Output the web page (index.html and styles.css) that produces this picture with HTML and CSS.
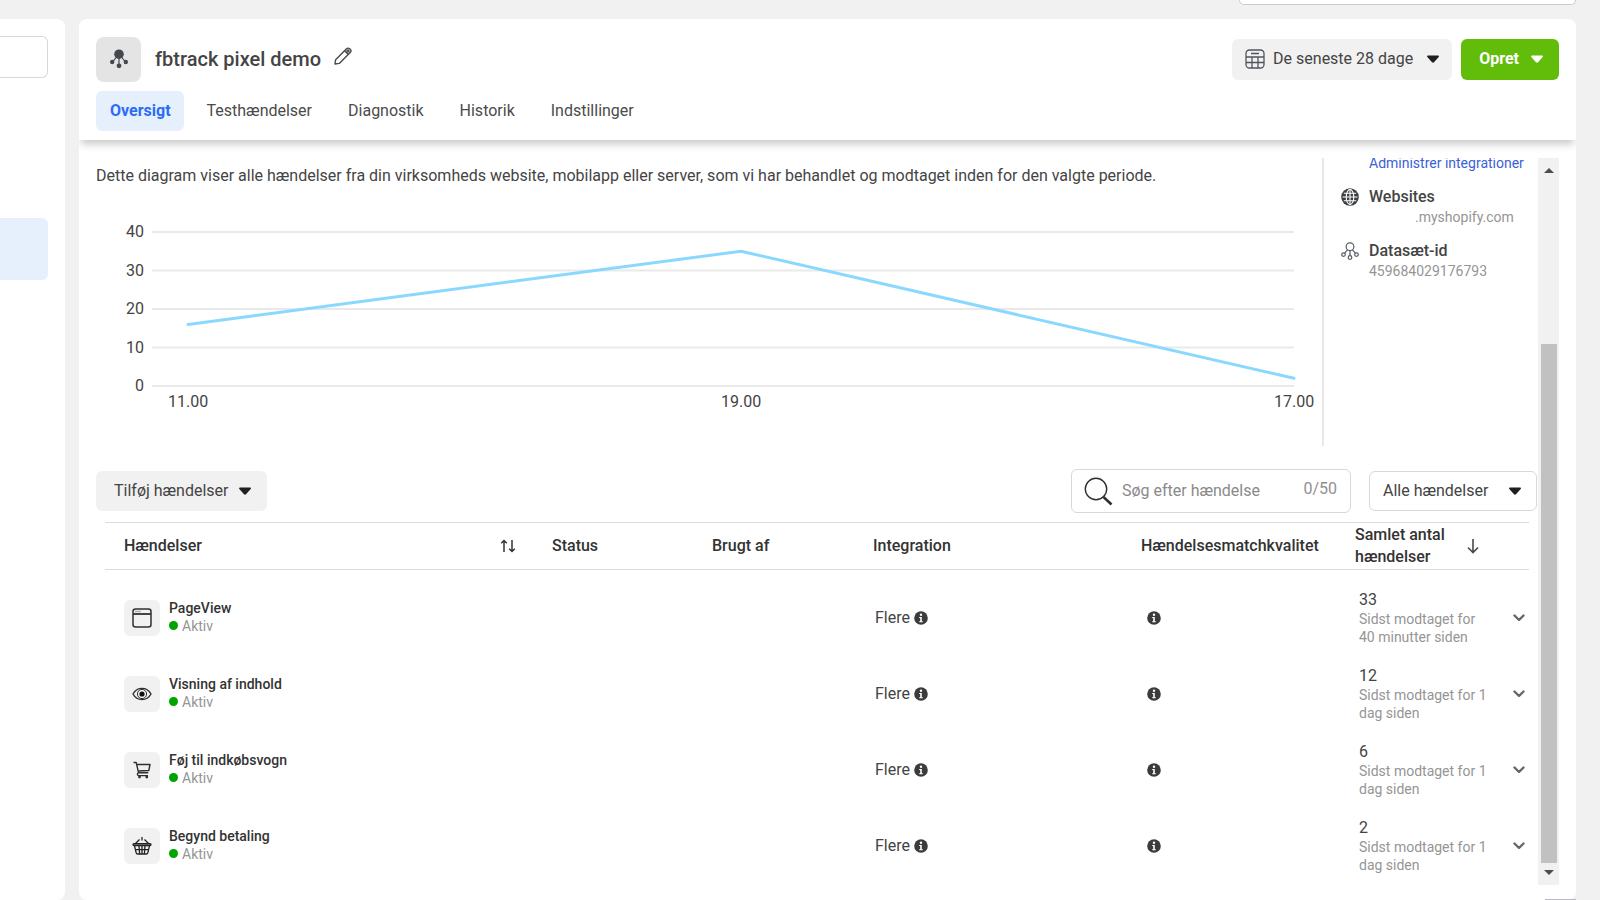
FILE: index.html
```html
<!DOCTYPE html>
<html lang="da">
<head>
<meta charset="utf-8">
<meta name="viewport" content="width=device-width, initial-scale=1">
<title>fbtrack pixel demo</title>
<link rel="stylesheet" href="styles.css">
</head>
<body>
<svg class="sprite" aria-hidden="true">
  <symbol id="caret" viewBox="0 0 12 8"><path d="M1 0.5h10c.8 0 1.200.9.7 1.500L7 7.200c-.6.6-1.400.6-2 0L.3 2C-.2 1.400.2.5 1 .5z" fill="currentColor"/></symbol>
  <symbol id="info" viewBox="0 0 14 14"><circle cx="7" cy="7" r="6.800" fill="#3b3b3b"/><circle cx="7" cy="3.700" r="1.200" fill="#fff"/><path d="M5.200 6h2.600v4.200h1v1H5.200v-1h1V7h-1z" fill="#fff"/></symbol>
  <symbol id="chevron" viewBox="0 0 12 8"><path d="M1.500 1.500L6 6l4.500-4.500" fill="none" stroke="#616870" stroke-width="2.400" stroke-linecap="round" stroke-linejoin="round"/></symbol>
</svg>

<div class="top-field"></div>
<div class="page">
  <aside class="side">
    <input class="side-input" type="text" aria-label="Søg">
    <div class="side-item"></div>
  </aside>

  <main class="panel">
    <header class="head">
      <div class="head-row">
        <span class="logo">
          <svg width="18" height="20" viewBox="0 0 18 20" fill="#444950" stroke="#444950"><circle cx="9" cy="5.200" r="4.800" stroke="none"/><circle cx="2.200" cy="13" r="2.200" stroke="none"/><circle cx="15.800" cy="13" r="2.200" stroke="none"/><circle cx="9" cy="16.800" r="2.400" stroke="none"/><path d="M6.500 8L3 12.500M11.500 8l3.500 4.500M9 8v8" stroke-width="1.200" fill="none"/></svg>
        </span>
        <h1 class="title">fbtrack pixel demo</h1>
        <button class="edit" aria-label="Rediger navn">
          <svg width="18" height="18" viewBox="0 0 18 18" fill="none" stroke="#4b4b4b" stroke-width="1.400" stroke-linejoin="round"><path d="M1 17l.6-4.300L12.500 1.800c.9-.9 2.300-.9 3.200 0l.5.5c.9.9.9 2.300 0 3.200L5.300 16.400z"/><path d="M10.600 3.700l3.700 3.700"/><circle cx="14" cy="4" r="1"/></svg>
        </button>
        <button class="btn date">
          <svg width="20" height="20" viewBox="0 0 20 20" fill="none" stroke="#50555c" stroke-width="1.300"><rect x="1" y="1" width="18" height="18" rx="3.500"/><path d="M1 8h18M1 13.500h18M7 8V19M13 8V19M6 4.500h8"/></svg>
          <span>De seneste 28 dage</span>
          <svg class="caret" width="12" height="8"><use href="#caret"/></svg>
        </button>
        <button class="btn create"><span>Opret</span><svg class="caret" width="12" height="8"><use href="#caret"/></svg></button>
      </div>
      <nav class="tabs">
        <a class="tab active" href="#oversigt">Oversigt</a>
        <a class="tab" href="#test">Testhændelser</a>
        <a class="tab" href="#diagnostik">Diagnostik</a>
        <a class="tab" href="#historik">Historik</a>
        <a class="tab" href="#indstillinger">Indstillinger</a>
      </nav>
    </header>

    <div class="body">
      <div class="content">
        <section class="overview">
          <div class="chart">
            <p class="desc">Dette diagram viser alle hændelser fra din virksomheds website, mobilapp eller server, som vi har behandlet og modtaget inden for den valgte periode.</p>
            <div class="plot-row">
              <div class="y-axis"><span>40</span><span>30</span><span>20</span><span>10</span><span>0</span></div>
              <div class="plot">
                <svg class="lines" viewBox="0 0 1142 154" preserveAspectRatio="none" role="img" aria-label="Hændelser over tid">
                  <path class="grid-line" d="M0 0H1142M0 38.500H1142M0 77H1142M0 115.500H1142M0 154H1142"/>
                  <path class="data-line" d="M36 92.400L589 19.250L1142 146.300"/>
                </svg>
              </div>
            </div>
            <div class="x-axis"><span>11.00</span><span>19.00</span><span>17.00</span></div>
          </div>
          <aside class="info">
            <a class="manage" href="#integrationer">Administrer integrationer</a>
            <div class="info-item">
              <svg width="18" height="18" viewBox="0 0 18 18"><circle cx="9" cy="9" r="8.800" fill="#3c4043"/><g fill="none" stroke="#fff" stroke-width="1.100"><ellipse cx="9" cy="9" rx="3.800" ry="7.500"/><path d="M9 1v16M1.500 9h15M2.800 5.300h12.400M2.800 12.700h12.400"/></g></svg>
              <div><h2>Websites</h2><p class="site">.myshopify.com</p></div>
            </div>
            <div class="info-item">
              <svg width="18" height="18" viewBox="0 0 20 20" fill="none" stroke="#5b6068" stroke-width="1.400"><circle cx="10" cy="5.200" r="4.300"/><circle cx="2.800" cy="14" r="2"/><circle cx="17.200" cy="14" r="2"/><circle cx="10" cy="17.200" r="2"/><path d="M7.300 8.700L4 12.300M12.700 8.700l3.300 3.600M10 9.500v5.700"/></svg>
              <div><h2>Datasæt-id</h2><p>459684029176793</p></div>
            </div>
          </aside>
        </section>

        <section class="toolbar">
          <button class="btn add"><span>Tilføj hændelser</span><svg class="caret" width="12" height="8"><use href="#caret"/></svg></button>
          <label class="search">
            <svg width="29" height="29" viewBox="0 0 29 29" fill="none" stroke="#303030"><circle cx="12" cy="12" r="10.700" stroke-width="1.400"/><path d="M19.500 20l8 7.500" stroke-width="2.600"/></svg>
            <input type="text" placeholder="Søg efter hændelse" aria-label="Søg efter hændelse" maxlength="50">
            <span class="count">0/50</span>
          </label>
          <span class="filter">
            <select aria-label="Filtrer hændelser"><option>Alle hændelser</option></select>
            <svg class="caret" width="12" height="8"><use href="#caret"/></svg>
          </span>
        </section>

        <table class="events">
          <colgroup><col><col class="c-status"><col class="c-used"><col class="c-int"><col class="c-match"><col class="c-total"><col class="c-open"></colgroup>
          <thead>
            <tr>
              <th class="first"><div class="th-row">Hændelser<svg width="16" height="14" viewBox="0 0 16 14" fill="none" stroke="#333" stroke-width="1.500"><path d="M4 13V1.500M1.200 4.300L4 1.500l2.800 2.800M12 1v11.500M9.200 9.700l2.800 2.800 2.800-2.800"/></svg></div></th>
              <th>Status</th><th>Brugt af</th><th>Integration</th><th>Hændelsesmatchkvalitet</th>
              <th colspan="2"><div class="th-total"><span>Samlet antal hændelser</span><svg width="12" height="16" viewBox="0 0 12 16" fill="none" stroke="#4a4a4a" stroke-width="1.600"><path d="M6 1v13M1 9.500l5 5 5-5"/></svg></div></th>
            </tr>
          </thead>
          <tbody>
            <tr>
              <td class="first"><div class="event"><span class="tile"><svg width="20" height="20" viewBox="0 0 20 20" fill="none" stroke="#303030" stroke-width="1.500"><rect x="1" y="1" width="18" height="18" rx="2.500"/><path d="M1 6h18" stroke-width="1.800"/><path d="M3 3.500h6" stroke="#aaa" stroke-width="1.400"/></svg></span><div><b>PageView</b><span class="status">Aktiv</span></div></div></td>
              <td></td><td></td>
              <td class="int">Flere <svg width="14" height="14"><use href="#info"/></svg></td>
              <td class="match"><svg width="14" height="14"><use href="#info"/></svg></td>
              <td class="total"><span class="num">33</span><span class="sub">Sidst modtaget for 40 minutter siden</span></td>
              <td class="open"><button aria-label="Vis detaljer"><svg width="12" height="8"><use href="#chevron"/></svg></button></td>
            </tr>
            <tr>
              <td class="first"><div class="event"><span class="tile"><svg width="20" height="14" viewBox="0 0 20 14" fill="none" stroke="#303030" stroke-width="1.400"><path d="M1 7c2-3.600 5.300-5.600 9-5.600S17 3.400 19 7c-2 3.600-5.300 5.600-9 5.600S3 10.600 1 7z"/><circle cx="10" cy="7" r="4.600" stroke-width="1"/><circle cx="10" cy="7" r="2.600" fill="#111" stroke="none"/></svg></span><div><b>Visning af indhold</b><span class="status">Aktiv</span></div></div></td>
              <td></td><td></td>
              <td class="int">Flere <svg width="14" height="14"><use href="#info"/></svg></td>
              <td class="match"><svg width="14" height="14"><use href="#info"/></svg></td>
              <td class="total"><span class="num">12</span><span class="sub">Sidst modtaget for 1 dag siden</span></td>
              <td class="open"><button aria-label="Vis detaljer"><svg width="12" height="8"><use href="#chevron"/></svg></button></td>
            </tr>
            <tr>
              <td class="first"><div class="event"><span class="tile"><svg width="18" height="18" viewBox="0 0 18 18" fill="none" stroke="#303030" stroke-width="1.400" stroke-linejoin="round"><path d="M.5 1.500h2.700l2.400 10.300h9.600M3.900 3.500H17l-1.200 6L5.100 10M5.600 11.800c-1.600.4-1.700 2.600 0 2.800h9.400"/><circle cx="6.500" cy="16" r="1.400" fill="#303030" stroke="none"/><circle cx="13.800" cy="16" r="1.400" fill="#303030" stroke="none"/></svg></span><div><b>Føj til indkøbsvogn</b><span class="status">Aktiv</span></div></div></td>
              <td></td><td></td>
              <td class="int">Flere <svg width="14" height="14"><use href="#info"/></svg></td>
              <td class="match"><svg width="14" height="14"><use href="#info"/></svg></td>
              <td class="total"><span class="num">6</span><span class="sub">Sidst modtaget for 1 dag siden</span></td>
              <td class="open"><button aria-label="Vis detaljer"><svg width="12" height="8"><use href="#chevron"/></svg></button></td>
            </tr>
            <tr>
              <td class="first"><div class="event"><span class="tile"><svg width="20" height="18" viewBox="0 0 20 18" fill="none" stroke="#222" stroke-width="1.300"><path d="M10 0v3.500M7.500 2.500L3.500 6.500M12.500 2.500l4 4"/><rect x="1" y="6.600" width="18" height="2" rx="1" fill="#777"/><path d="M2.500 8.600l1.600 7c.2.900.8 1.400 1.600 1.400h8.600c.8 0 1.400-.5 1.600-1.400l1.600-7M3.500 12.600h13M7 8.600l.6 8.400M13 8.600l-.6 8.400M10 8.600V17"/></svg></span><div><b>Begynd betaling</b><span class="status">Aktiv</span></div></div></td>
              <td></td><td></td>
              <td class="int">Flere <svg width="14" height="14"><use href="#info"/></svg></td>
              <td class="match"><svg width="14" height="14"><use href="#info"/></svg></td>
              <td class="total"><span class="num">2</span><span class="sub">Sidst modtaget for 1 dag siden</span></td>
              <td class="open"><button aria-label="Vis detaljer"><svg width="12" height="8"><use href="#chevron"/></svg></button></td>
            </tr>
          </tbody>
        </table>
      </div>

      <div class="scrollbar" aria-hidden="true">
        <svg width="10" height="6" viewBox="0 0 10 6"><path d="M0 6l5-5 5 5z" fill="#4d4d4d"/></svg>
        <div class="track"><div class="thumb"></div></div>
        <svg width="10" height="6" viewBox="0 0 10 6"><path d="M0 0l5 5 5-5z" fill="#4d4d4d"/></svg>
      </div>
    </div>
  </main>
</div>
<div class="corner"></div>
</body>
</html>
```

FILE: styles.css
```css
* { box-sizing: border-box; }

body {
  margin: 0;
  background: #f1f1f1;
  color: #444;
  font: 16px/20px Roboto, "Liberation Sans", sans-serif;
}

h1, h2, p { margin: 0; }
button, input, select { font: inherit; color: inherit; }
button { cursor: pointer; }
svg { flex: none; display: block; }
.sprite { position: absolute; width: 0; height: 0; }
.caret { color: #1f1f1f; }

.page {
  display: flex;
  gap: 14px;
  height: 100vh;
  padding: 19px 24px 0 0;
}

.top-field {
  position: absolute;
  top: 0;
  right: 24px;
  width: 337px;
  height: 5px;
  border: 1px solid #ccc;
  border-top: 0;
  border-radius: 0 0 6px 6px;
  background: #fff;
}

.corner {
  position: absolute;
  right: 24px;
  bottom: 0;
  width: 31px;
  height: 1px;
  background: #b9b9c6;
}

/* Left strip */
.side {
  flex: none;
  width: 65px;
  padding: 17px 17px 0 0;
  border-radius: 0 8px 8px 0;
  background: #fff;
}

.side-input {
  display: block;
  width: 100%;
  height: 42px;
  border: 1px solid #d8d8d8;
  border-left: 0;
  border-radius: 0 6px 6px 0;
  background: #fff;
}

.side-item {
  height: 62px;
  margin-top: 140px;
  border-radius: 0 6px 6px 0;
  background: #e6f0fd;
}

/* Main panel */
.panel {
  flex: 1;
  min-width: 0;
  display: flex;
  flex-direction: column;
  border-radius: 8px;
  background: #fff;
  overflow: hidden;
}

.head {
  flex: none;
  height: 121px;
  padding: 17px 17px 0;
  box-shadow: 0 6px 8px -2px rgba(0, 0, 0, 0.22);
}

.head-row { display: flex; align-items: center; height: 46px; }

.logo {
  display: grid;
  place-items: center;
  width: 45px;
  height: 45px;
  margin-right: 14px;
  border-radius: 8px;
  background: #e4e4e4;
}

.title { font-size: 20px; line-height: 24px; font-weight: 500; }

.edit {
  margin: 0 auto 6px 9px;
  padding: 4px;
  border: 0;
  background: none;
}

.btn {
  display: flex;
  align-items: center;
  border: 0;
  border-radius: 6px;
  background: #f1f1f1;
}

.date { height: 41px; padding: 0 13px; margin-right: 9px; gap: 8px; }
.date .caret { margin-left: 6px; }
.create { height: 41px; padding: 0 16px 0 18px; gap: 12px; background: #62bc0a; color: #fff; font-weight: 700; }
.create .caret { color: #fff; }

.tabs { display: flex; gap: 9px; margin-top: 9px; }

.tab {
  padding: 10px 13px 10px 14px;
  border-radius: 6px;
  color: #4b4b4b;
  text-decoration: none;
}

.tab.active { background: #e6f0fd; color: #2a6cf6; font-weight: 700; }

.body {
  flex: 1;
  min-height: 0;
  display: flex;
  margin: 18px 17px 15px;
}

.content { flex: 1; min-width: 0; padding-right: 1px; overflow: hidden; }

.overview { display: flex; height: 288px; }
.chart { flex: 1; min-width: 0; }
.desc { padding-top: 8px; white-space: nowrap; }

.plot-row { display: flex; gap: 8px; margin-top: 36px; padding-right: 28px; }

.y-axis {
  display: flex;
  flex-direction: column;
  justify-content: space-between;
  width: 48px;
  height: 174px;
  text-align: right;
}

.plot { flex: 1; padding: 10px 0; }
.lines { width: 100%; height: 154px; overflow: visible; }
.lines path { fill: none; vector-effect: non-scaling-stroke; }
.grid-line { stroke: #e9e9e9; stroke-width: 2px; }
.data-line { stroke: #8bd8ff; stroke-width: 3px; stroke-linecap: round; stroke-linejoin: round; }

.x-axis { display: flex; justify-content: space-between; padding: 0 8px 0 72px; margin-top: -4px; }
.x-axis span { width: 40px; text-align: center; }

.info {
  flex: none;
  width: 215px;
  padding-left: 17px;
  border-left: 2px solid #e8e8ec;
  font-size: 14px;
}

.manage {
  display: block;
  margin: -5px 0 14px 28px;
  color: #3a5fd8;
  text-decoration: none;
  white-space: nowrap;
}

.info-item { display: grid; grid-template-columns: 18px 1fr; column-gap: 10px; margin-bottom: 14px; }
.info-item svg { margin-top: 1px; }
.info-item h2 { font-size: 16px; line-height: 20px; font-weight: 500; }
.info-item p { color: #959595; }
.site { padding-left: 46px; }

/* Toolbar */
.toolbar { display: flex; align-items: center; margin-top: 23px; }
.add { height: 40px; margin-right: auto; padding: 0 16px 0 18px; gap: 11px; }

.search {
  display: flex;
  align-items: center;
  gap: 9px;
  width: 280px;
  height: 44px;
  margin-right: 18px;
  padding: 0 13px 0 12px;
  border: 1px solid #d8d8d8;
  border-radius: 6px;
}

.search input { flex: 1; min-width: 0; padding: 0; border: 0; outline: 0; }
.search input::placeholder { color: #8a8a8a; opacity: 1; }
.count { padding-bottom: 4px; color: #909090; }

.filter { position: relative; }

.filter select {
  width: 168px;
  height: 40px;
  padding: 0 32px 0 13px;
  border: 1px solid #d8d8d8;
  border-radius: 6px;
  background: #fff;
  appearance: none;
}

.filter .caret { position: absolute; right: 16px; top: 16px; pointer-events: none; }

/* Events table */
.events {
  width: calc(100% - 17px);
  margin: 9px 8px 0 9px;
  border-collapse: collapse;
  table-layout: fixed;
}

.c-status { width: 160px; }
.c-used { width: 161px; }
.c-int { width: 268px; }
.c-match { width: 214px; }
.c-total { width: 160px; }
.c-open { width: 30px; }

.events th {
  height: 47px;
  padding: 0 0 0 16px;
  border-top: 1px solid #dcdcdc;
  border-bottom: 1px solid #dcdcdc;
  color: #333;
  font-weight: 500;
  text-align: left;
}

.events th.first, .events td.first { padding-left: 19px; }
.th-row { display: flex; align-items: center; justify-content: space-between; padding-right: 20px; }
.th-total { display: flex; align-items: center; gap: 12px; line-height: 22px; }
.th-total span { width: 100px; }

.events td { height: 76px; padding: 0; }
.events tbody tr:first-child td { height: 86px; padding-top: 10px; }
.event { display: flex; align-items: center; gap: 9px; font-size: 14px; line-height: 18px; }
.event div { padding-bottom: 2px; }
.event b { display: block; color: #333; font-weight: 500; }

.tile {
  display: grid;
  place-items: center;
  width: 36px;
  height: 36px;
  border-radius: 6px;
  background: #f1f1f1;
}

.status { display: flex; align-items: center; gap: 4px; color: #959595; }
.status::before { content: ""; width: 9px; height: 9px; border-radius: 50%; background: #00a400; }

.events td.int { padding-left: 18px; }
.int svg { display: inline-block; vertical-align: -2px; }
.events td.match { padding-left: 22px; }
.events td.total { padding-left: 20px; }
.num { display: block; }
.sub { display: block; width: 130px; color: #959595; font-size: 14px; line-height: 18px; }
.open button { display: block; margin: 0 4px 0 auto; padding: 0; border: 0; background: none; }

/* Scrollbar */
.scrollbar {
  flex: none;
  display: flex;
  flex-direction: column;
  align-items: center;
  width: 21px;
  padding: 9px 0;
  background: #f1f1f1;
}

.track { flex: 1; display: flex; flex-direction: column; justify-content: flex-end; margin: 7px 0; }
.thumb { width: 16px; height: 76%; background: #c1c1c1; }
```
